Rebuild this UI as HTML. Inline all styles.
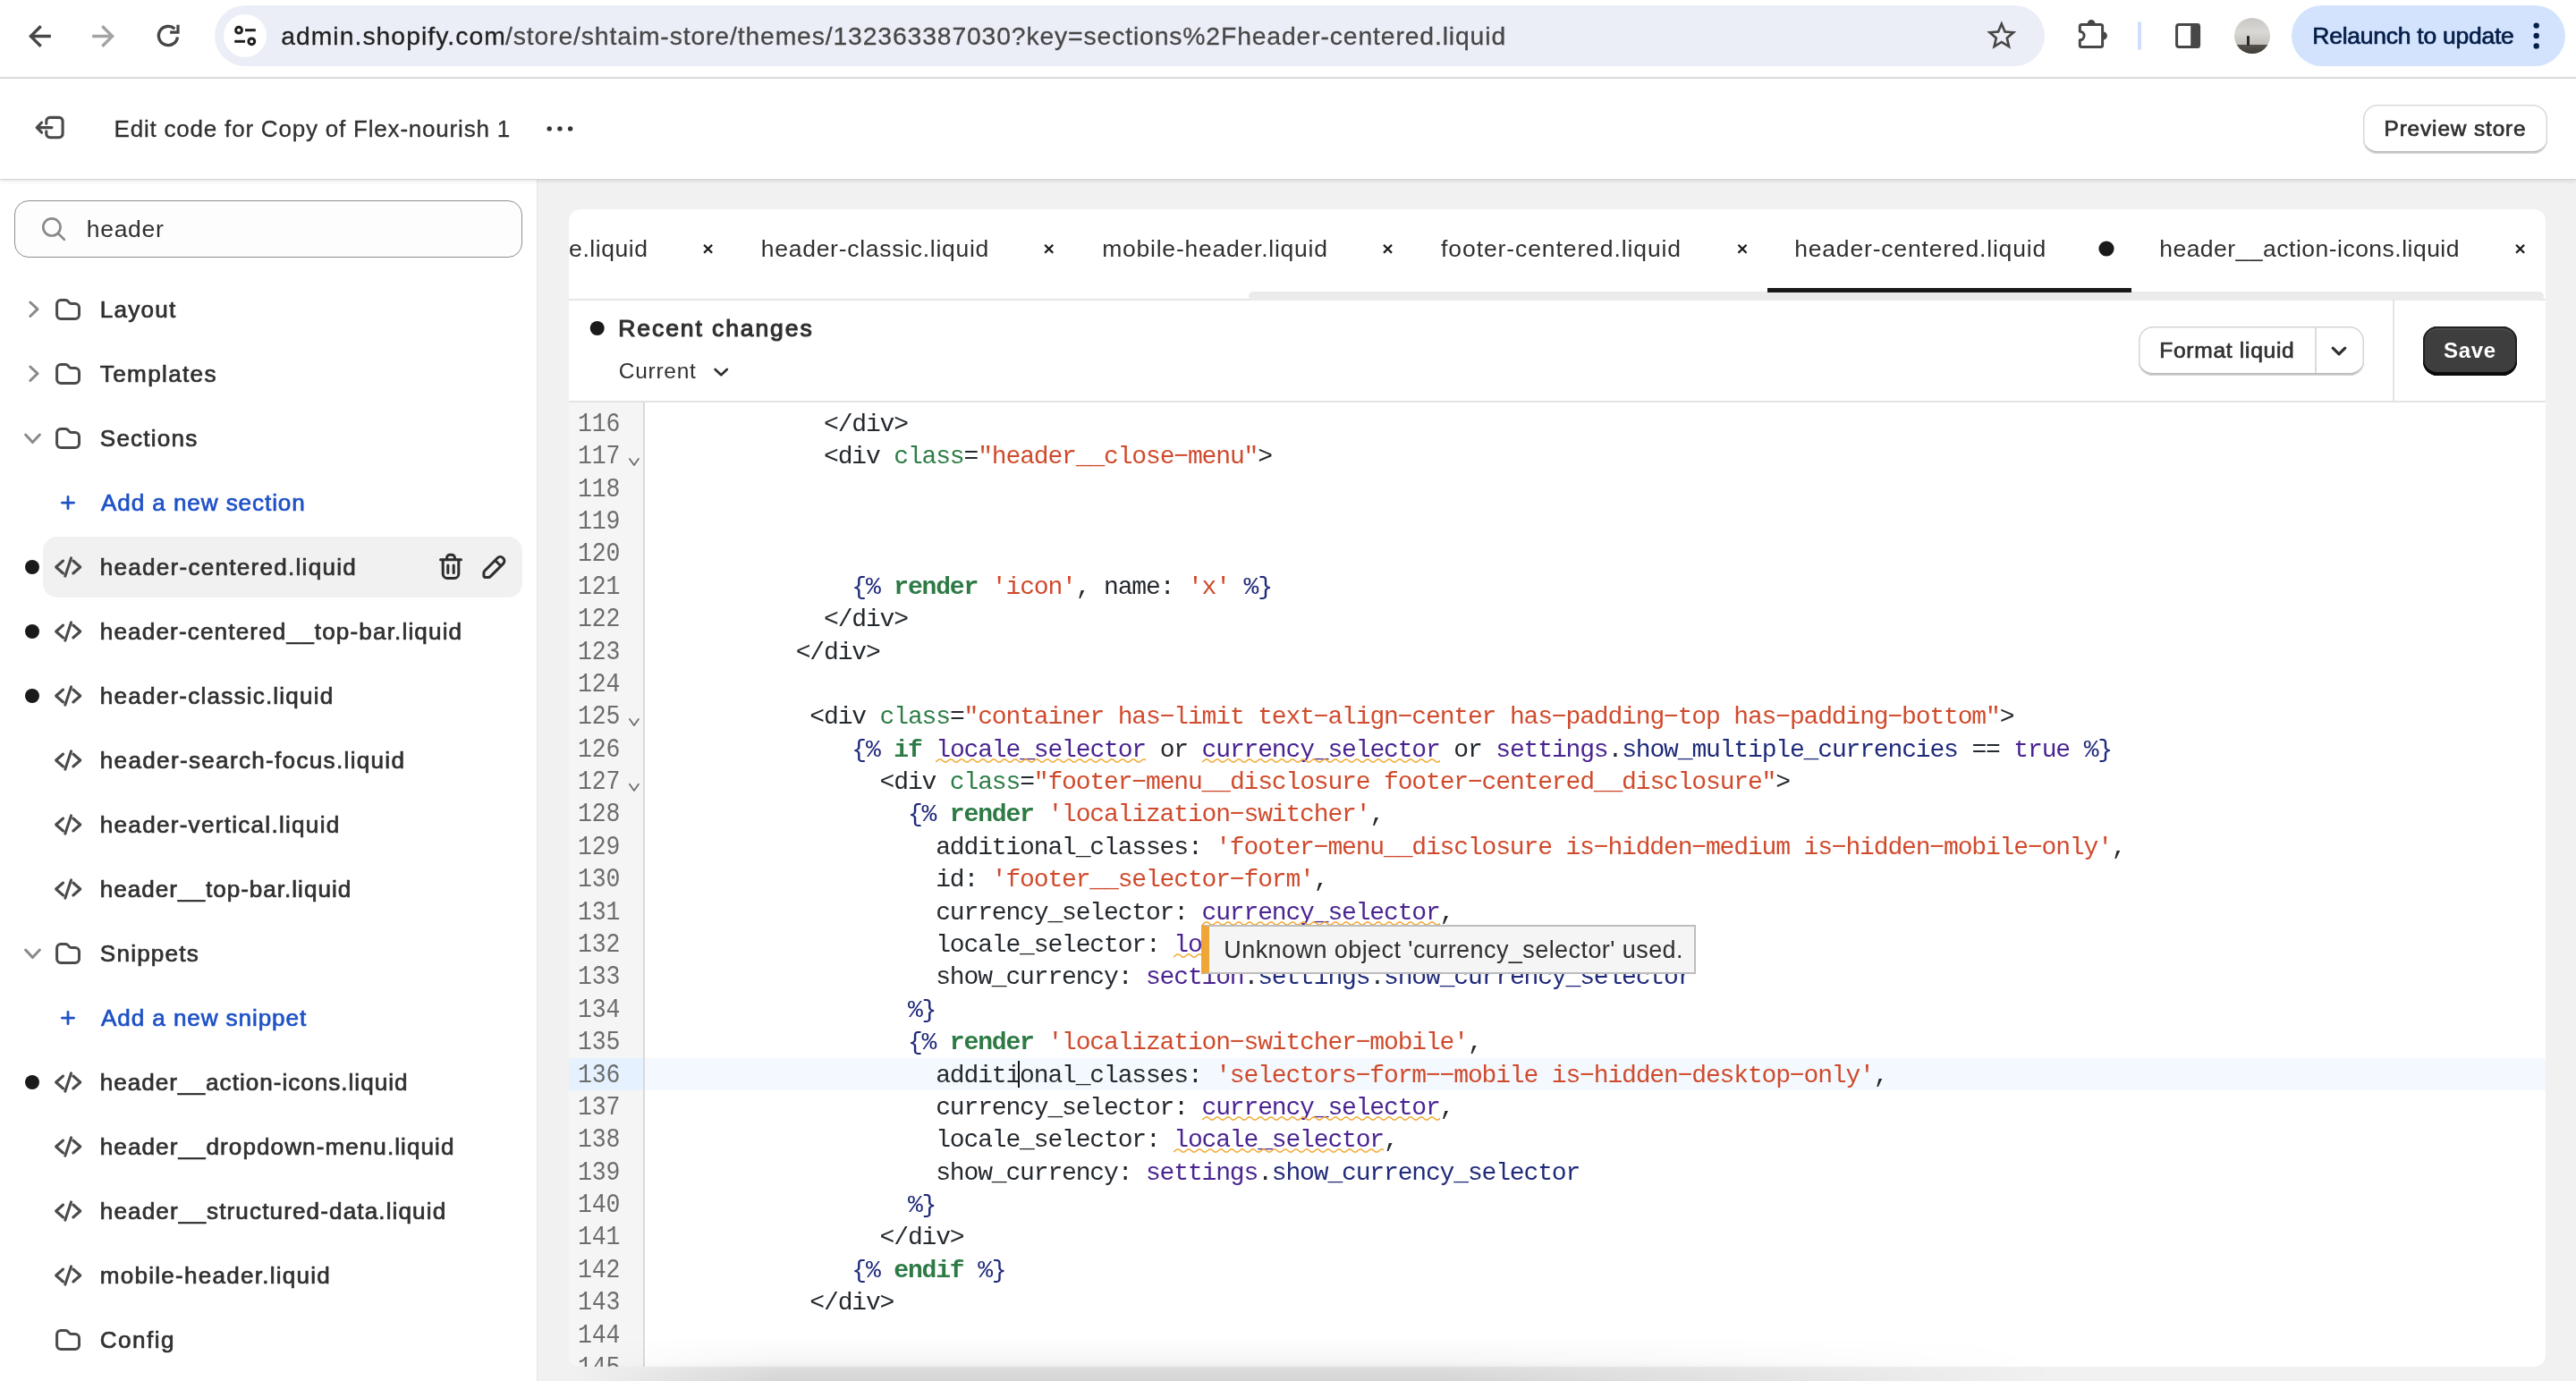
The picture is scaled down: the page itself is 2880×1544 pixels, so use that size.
<!DOCTYPE html><html><head><meta charset="utf-8"><title>Edit code</title><style>*{box-sizing:border-box;margin:0;padding:0}
html,body{width:2880px;height:1544px;overflow:hidden;background:#f1f1f1;font-family:"Liberation Sans",sans-serif}
body{position:relative}
#root{position:absolute;left:0;top:0;width:2880px;height:1544px;will-change:transform}
.abs{position:absolute}
.tx{position:absolute;white-space:nowrap;line-height:40px;height:40px;z-index:10}
svg{position:absolute;overflow:visible}
/* chrome toolbar */
#ctb{position:absolute;left:0;top:0;width:2880px;height:88px;background:#fff;border-bottom:2px solid #dcdee1}
#url{position:absolute;left:240px;top:6px;width:2046px;height:68px;border-radius:34px;background:#ebeef7}
#tune{position:absolute;left:250px;top:16px;width:48px;height:48px;border-radius:24px;background:#fff}
#relaunch{position:absolute;left:2562px;top:6px;width:306px;height:68px;border-radius:34px;background:#d3e3fd}
#avatar{position:absolute;left:2498px;top:20px;width:40px;height:40px;border-radius:20px;overflow:hidden;background:linear-gradient(#c9c7c3 0,#dad8d4 40%,#c4c1bc 74%,#57524c 76%,#3f3b36 100%)}
#avatar i{position:absolute;left:14px;top:20px;width:3px;height:11px;background:#2a2724;border-radius:1px}
#cdiv{position:absolute;left:2390px;top:24px;width:3.6px;height:32px;border-radius:2px;background:#d0defa}
/* shopify header */
#shdr{position:absolute;left:0;top:88px;width:2880px;height:112px;background:#fff;box-shadow:0 1px 0 #d5d5d5,0 2px 5px rgba(0,0,0,.12);z-index:2}
#pv{position:absolute;left:2642px;top:117px;width:206px;height:55px;border-radius:16px;background:#fff;box-shadow:inset 0 0 0 1.5px #d9d9d9,inset 0 -3px 0 #b8b8b8;z-index:3}
/* sidebar */
#side{position:absolute;left:0;top:200px;width:601px;height:1344px;background:#fff;border-right:1.4px solid #e4e4e4}
#search{position:absolute;left:16px;top:224px;width:568px;height:64px;border-radius:16px;background:#fdfdfd;border:1.3px solid #8a8f94}
#sel{position:absolute;left:48px;top:600px;width:536px;height:67.6px;border-radius:16px;background:#f1f1f1}
/* card */
#card{position:absolute;left:636px;top:234px;width:2210px;height:1294px;border-radius:13px;background:#fff;overflow:hidden}
#tabline{position:absolute;left:0;top:99.5px;width:2210px;height:2px;background:#e6e6e6}
#tabthumb{position:absolute;left:760px;top:92px;width:1448px;height:9.5px;border-radius:5px;background:#ebebeb}
#tabact{position:absolute;left:1340px;top:88px;width:407px;height:5px;background:#1a1a1a}
#tbline{position:absolute;left:0;top:213.5px;width:2210px;height:2px;background:#e3e3e3}
#tbdiv{position:absolute;left:2039px;top:101px;width:2px;height:113px;background:#e3e3e3}
#fmt{position:absolute;left:1755px;top:131px;width:252px;height:55px;border-radius:16px;background:#fff;box-shadow:inset 0 0 0 1.5px #d4d4d4,inset 0 -3px 0 #b8b8b8}
#fmt i{position:absolute;left:197px;top:1px;width:2px;height:51px;background:#dcdcdc}
#save{position:absolute;left:2073px;top:131px;width:105px;height:55px;border-radius:16px;background:#3e3e3e;box-shadow:inset 0 -4px 0 #0c0c0c,inset 0 0 0 2px #222,inset 0 4px 0 #4c4c4c}
#gutter{position:absolute;left:0;top:215.5px;width:85px;height:1080px;background:#f5f5f5;border-right:2px solid #dadada}
/* code */
.code{position:absolute;left:636px;top:0;width:2210px;height:1528px;font-family:"Liberation Mono",monospace;z-index:3;overflow:hidden;clip-path:inset(450px 0 0 0 round 0 0 13px 13px)}
.ln{position:absolute;left:0;width:2210px;white-space:pre}
.ln.act{background:#f3f9fe}
.ln.act .num{background:#e5f1fe}
.num{position:absolute;left:0;top:0;padding-top:1.6px;width:85px;border-right:2px solid #dadada;height:100%;padding-left:10px;color:#6d6d6d}
.src{position:absolute;top:1.6px}
.num i{display:inline-block;font-style:normal;transform:scaleY(1.09);transform-origin:50% 66%}
.b{font-weight:700}
.sqv{overflow:hidden}
/* tooltip */
#tip{position:absolute;left:1343.2px;top:1034.4px;width:552.6px;height:55px;background:#f5f5f5;border:2px solid #bdbdbd;border-left:9.6px solid #f0a637;z-index:6}
#botshadow{position:absolute;left:640px;top:1494px;width:1660px;height:50px;z-index:7;background:linear-gradient(to bottom,rgba(0,0,0,0) 0,rgba(0,0,0,.035) 55%,rgba(0,0,0,.09) 75%,rgba(0,0,0,.115) 100%);-webkit-mask-image:linear-gradient(to right,transparent 0,#000 14%,#000 58%,transparent 100%);mask-image:linear-gradient(to right,transparent 0,#000 14%,#000 58%,transparent 100%)}
</style></head><body><div id="root"><div id="ctb"></div><div id="url"></div><div id="tune"></div><div id="relaunch"></div><div id="avatar"><i></i></div><div id="cdiv"></div><svg style="left:25.5px;top:21.6px" width="37" height="37" viewBox="0 0 24 24"><path fill="#474747" d="M20 10.9H8.1l5.45-5.45L12 3.9l-8.1 8.1 8.1 8.1 1.55-1.55L8.1 13.1H20v-2.2z"/></svg><svg style="left:97px;top:21.6px" width="37" height="37" viewBox="0 0 24 24"><path fill="#a3a3a3" d="M4 10.9h11.9l-5.45-5.45L12 3.9l8.1 8.1-8.1 8.1-1.55-1.55L15.9 13.1H4v-2.2z"/></svg><svg style="left:0;top:0" width="400" height="88"><g fill="none" stroke="#474747" stroke-width="3.4"><path d="M195.3 32.3A10.6 10.6 0 1 0 198.5 41.4"/><path d="M199 27.7V36.2H190.1" stroke-width="3.2"/></g></svg><svg style="left:0;top:0" width="400" height="88"><g fill="none" stroke="#1f1f1f" stroke-width="3"><circle cx="267" cy="33.7" r="3.4"/><path d="M274 33.7H285.8"/><path d="M262.2 46.3H274"/><circle cx="281.3" cy="46.3" r="3.4"/></g></svg><svg style="left:2217.7px;top:19.6px" width="39.6" height="39.6" viewBox="0 0 24 24"><path fill="#474747" d="M22 9.24l-7.19-.62L12 2 9.19 8.63 2 9.24l5.46 4.73L5.82 21 12 17.27 18.18 21l-1.63-7.03L22 9.24zM12 15.4l-3.76 2.27 1-4.28-3.32-2.88 4.38-.38L12 6.1l1.71 4.04 4.38.38-3.32 2.88 1 4.28L12 15.4z"/></svg><svg style="left:0;top:0" width="2880" height="88"><path fill="none" stroke="#474747" stroke-width="3" stroke-linejoin="round" d="M2325.3 35.2V29.4a2 2 0 0 1 2-2H2348.6a2 2 0 0 1 2 2V50.5a2 2 0 0 1-2 2H2327.3a2 2 0 0 1-2-2V44.8A4.8 4.8 0 0 0 2325.3 35.2z"/><path fill="#474747" d="M2333.6 26.6A4.5 4.5 0 0 1 2342.6 26.6zM2351.4 35.5A4.5 4.5 0 0 1 2351.4 44.5z"/></svg><svg style="left:0;top:0" width="2880" height="88"><rect x="2433.6" y="27.4" width="25" height="25.1" rx="2.6" fill="none" stroke="#474747" stroke-width="3"/><rect x="2449.2" y="26.5" width="10" height="27" fill="#474747"/></svg><svg style="left:0;top:0" width="2880" height="88"><g fill="#041e49"><circle cx="2835.7" cy="28.6" r="3.2"/><circle cx="2835.7" cy="40" r="3.2"/><circle cx="2835.7" cy="51.4" r="3.2"/></g></svg><div id="shdr"></div><div id="pv"></div><svg style="left:0;top:88px;z-index:4" width="800" height="112"><g fill="none" stroke="#4a4a4a" stroke-width="3.1" stroke-linecap="round" stroke-linejoin="round"><path d="M51.8 50.3V47.4a4 4 0 0 1 4-4H66.1a4 4 0 0 1 4 4V61.7a4 4 0 0 1-4 4H55.8a4 4 0 0 1-4-4V58.9"/><path d="M58 54.6H42.6M46.6 49L41.2 54.6L46.6 60.2"/></g><g fill="#333"><circle cx="614.2" cy="55.9" r="2.7"/><circle cx="625.9" cy="55.9" r="2.7"/><circle cx="637.6" cy="55.9" r="2.7"/></g></svg><div id="side"></div><div id="search"></div><div id="sel"></div><svg style="left:0;top:0;z-index:1" width="601" height="1544"><g fill="none" stroke="#8a8a8a" stroke-width="2.7" stroke-linecap="round"><circle cx="57.9" cy="253.9" r="9.6"/><path d="M65 261L71.9 267.9"/></g><path d="M33.8 338L42 345.7L33.8 353.5" fill="none" stroke="#8a8a8a" stroke-width="3" stroke-linecap="round" stroke-linejoin="round"/><path transform="translate(0,0)" d="M63.6 340a4.5 4.5 0 0 1 4.5-4.5h5.2a3.5 3.5 0 0 1 2.7 1.3l1.1 1.3a3.5 3.5 0 0 0 2.7 1.3h4.2a4.5 4.5 0 0 1 4.5 4.5v8a4.5 4.5 0 0 1-4.5 4.5H68.1a4.5 4.5 0 0 1-4.5-4.5z" fill="none" stroke="#4a4a4a" stroke-width="3" stroke-linejoin="round"/><path d="M33.8 410L42 417.7L33.8 425.5" fill="none" stroke="#8a8a8a" stroke-width="3" stroke-linecap="round" stroke-linejoin="round"/><path transform="translate(0,72)" d="M63.6 340a4.5 4.5 0 0 1 4.5-4.5h5.2a3.5 3.5 0 0 1 2.7 1.3l1.1 1.3a3.5 3.5 0 0 0 2.7 1.3h4.2a4.5 4.5 0 0 1 4.5 4.5v8a4.5 4.5 0 0 1-4.5 4.5H68.1a4.5 4.5 0 0 1-4.5-4.5z" fill="none" stroke="#4a4a4a" stroke-width="3" stroke-linejoin="round"/><path d="M28.6 486L36.4 494.6L44.4 486" fill="none" stroke="#8a8a8a" stroke-width="3" stroke-linecap="round" stroke-linejoin="round"/><path transform="translate(0,144)" d="M63.6 340a4.5 4.5 0 0 1 4.5-4.5h5.2a3.5 3.5 0 0 1 2.7 1.3l1.1 1.3a3.5 3.5 0 0 0 2.7 1.3h4.2a4.5 4.5 0 0 1 4.5 4.5v8a4.5 4.5 0 0 1-4.5 4.5H68.1a4.5 4.5 0 0 1-4.5-4.5z" fill="none" stroke="#4a4a4a" stroke-width="3" stroke-linejoin="round"/><path d="M69.4 562.1H82.6M76 555.5V568.7" fill="none" stroke="#1f52c7" stroke-width="2.8" stroke-linecap="round"/><g fill="none" stroke="#4a4a4a" stroke-width="3" stroke-linecap="round" stroke-linejoin="round"><path d="M70.6 627L62.6 634L70.6 641"/><path d="M79.6 623.8L72.8 644.2"/><path d="M81.8 627L89.8 634L81.8 641"/></g><circle cx="36" cy="634" r="8" fill="#1a1a1a"/><g fill="none" stroke="#4a4a4a" stroke-width="3" stroke-linecap="round" stroke-linejoin="round"><path d="M70.6 699L62.6 706L70.6 713"/><path d="M79.6 695.8L72.8 716.2"/><path d="M81.8 699L89.8 706L81.8 713"/></g><circle cx="36" cy="706" r="8" fill="#1a1a1a"/><g fill="none" stroke="#4a4a4a" stroke-width="3" stroke-linecap="round" stroke-linejoin="round"><path d="M70.6 771L62.6 778L70.6 785"/><path d="M79.6 767.8L72.8 788.2"/><path d="M81.8 771L89.8 778L81.8 785"/></g><circle cx="36" cy="778" r="8" fill="#1a1a1a"/><g fill="none" stroke="#4a4a4a" stroke-width="3" stroke-linecap="round" stroke-linejoin="round"><path d="M70.6 843L62.6 850L70.6 857"/><path d="M79.6 839.8L72.8 860.2"/><path d="M81.8 843L89.8 850L81.8 857"/></g><g fill="none" stroke="#4a4a4a" stroke-width="3" stroke-linecap="round" stroke-linejoin="round"><path d="M70.6 915L62.6 922L70.6 929"/><path d="M79.6 911.8L72.8 932.2"/><path d="M81.8 915L89.8 922L81.8 929"/></g><g fill="none" stroke="#4a4a4a" stroke-width="3" stroke-linecap="round" stroke-linejoin="round"><path d="M70.6 987L62.6 994L70.6 1001"/><path d="M79.6 983.8L72.8 1004.2"/><path d="M81.8 987L89.8 994L81.8 1001"/></g><path d="M28.6 1062L36.4 1070.6L44.4 1062" fill="none" stroke="#8a8a8a" stroke-width="3" stroke-linecap="round" stroke-linejoin="round"/><path transform="translate(0,720)" d="M63.6 340a4.5 4.5 0 0 1 4.5-4.5h5.2a3.5 3.5 0 0 1 2.7 1.3l1.1 1.3a3.5 3.5 0 0 0 2.7 1.3h4.2a4.5 4.5 0 0 1 4.5 4.5v8a4.5 4.5 0 0 1-4.5 4.5H68.1a4.5 4.5 0 0 1-4.5-4.5z" fill="none" stroke="#4a4a4a" stroke-width="3" stroke-linejoin="round"/><path d="M69.4 1138.1H82.6M76 1131.5V1144.7" fill="none" stroke="#1f52c7" stroke-width="2.8" stroke-linecap="round"/><g fill="none" stroke="#4a4a4a" stroke-width="3" stroke-linecap="round" stroke-linejoin="round"><path d="M70.6 1203L62.6 1210L70.6 1217"/><path d="M79.6 1199.8L72.8 1220.2"/><path d="M81.8 1203L89.8 1210L81.8 1217"/></g><circle cx="36" cy="1210" r="8" fill="#1a1a1a"/><g fill="none" stroke="#4a4a4a" stroke-width="3" stroke-linecap="round" stroke-linejoin="round"><path d="M70.6 1275L62.6 1282L70.6 1289"/><path d="M79.6 1271.8L72.8 1292.2"/><path d="M81.8 1275L89.8 1282L81.8 1289"/></g><g fill="none" stroke="#4a4a4a" stroke-width="3" stroke-linecap="round" stroke-linejoin="round"><path d="M70.6 1347L62.6 1354L70.6 1361"/><path d="M79.6 1343.8L72.8 1364.2"/><path d="M81.8 1347L89.8 1354L81.8 1361"/></g><g fill="none" stroke="#4a4a4a" stroke-width="3" stroke-linecap="round" stroke-linejoin="round"><path d="M70.6 1419L62.6 1426L70.6 1433"/><path d="M79.6 1415.8L72.8 1436.2"/><path d="M81.8 1419L89.8 1426L81.8 1433"/></g><path transform="translate(0,1152)" d="M63.6 340a4.5 4.5 0 0 1 4.5-4.5h5.2a3.5 3.5 0 0 1 2.7 1.3l1.1 1.3a3.5 3.5 0 0 0 2.7 1.3h4.2a4.5 4.5 0 0 1 4.5 4.5v8a4.5 4.5 0 0 1-4.5 4.5H68.1a4.5 4.5 0 0 1-4.5-4.5z" fill="none" stroke="#4a4a4a" stroke-width="3" stroke-linejoin="round"/><g fill="none" stroke="#2e2e2e" stroke-width="3" stroke-linecap="round" stroke-linejoin="round"><path d="M492.5 625.8H515.5"/><path d="M499.6 625V623.6a3.4 3.4 0 0 1 3.4-3.4h2a3.4 3.4 0 0 1 3.4 3.4v1.4"/><path d="M495.2 626.5V641.5a5 5 0 0 0 5 5h7.6a5 5 0 0 0 5-5V626.5"/><path d="M500.8 632V640.5M507.2 632V640.5"/></g><g fill="none" stroke="#2e2e2e" stroke-width="3" stroke-linecap="round" stroke-linejoin="round"><path d="M540.9 643.6V640.3a3 3 0 0 1 .9-2.1L556.3 623.7a4.2 4.2 0 0 1 5.9 0l.5.5a4.2 4.2 0 0 1 0 5.9L548.2 644.6a3 3 0 0 1-2.1.9H542.8a1.9 1.9 0 0 1-1.9-1.9z"/><path d="M553.9 626.7l5.5 5.5"/></g></svg><div id="card"><div id="tabline"></div><div id="tabthumb"></div><div id="tabact"></div><div id="tbline"></div><div id="tbdiv"></div><div id="fmt"><i></i></div><div id="save"></div><div id="gutter"></div><svg style="left:0;top:0" width="2210" height="220"><path d="M151.1 39.8L160.1 48.8M160.1 39.8L151.1 48.8" stroke="#1a1a1a" stroke-width="2.3" fill="none"/><path d="M532.2 39.8L541.2 48.8M541.2 39.8L532.2 48.8" stroke="#1a1a1a" stroke-width="2.3" fill="none"/><path d="M911.0 39.8L920.0 48.8M920.0 39.8L911.0 48.8" stroke="#1a1a1a" stroke-width="2.3" fill="none"/><path d="M1307.5 39.8L1316.5 48.8M1316.5 39.8L1307.5 48.8" stroke="#1a1a1a" stroke-width="2.3" fill="none"/><path d="M2177.1 39.8L2186.1 48.8M2186.1 39.8L2177.1 48.8" stroke="#1a1a1a" stroke-width="2.3" fill="none"/><circle cx="1719" cy="44" r="8.6" fill="#1a1a1a"/><circle cx="31.7" cy="133" r="8" fill="#1a1a1a"/><path d="M163.6 179L170.2 185.2L176.8 179" fill="none" stroke="#303030" stroke-width="2.7" stroke-linecap="round" stroke-linejoin="round"/><path d="M1972.2 155.2L1979 161.8L1985.8 155.2" fill="none" stroke="#303030" stroke-width="3.2" stroke-linecap="round" stroke-linejoin="round"/></svg></div><span class="tx" id="t0" style="left:314.20px;top:20.00px;font-size:28.3px;color:#1f1f1f;font-weight:400;letter-spacing:1.046px;-webkit-text-stroke:0.3px #1f1f1f;">admin.shopify.com</span><span class="tx" id="t1" style="left:565.00px;top:20.00px;font-size:28.3px;color:#474747;font-weight:400;letter-spacing:0.876px;-webkit-text-stroke:0.3px #474747;">/store/shtaim-store/themes/132363387030?key=sections%2Fheader-centered.liquid</span><span class="tx" id="t2" style="left:2585.30px;top:20.00px;font-size:26.5px;color:#041e49;font-weight:400;letter-spacing:-0.258px;-webkit-text-stroke:0.7px #041e49;">Relaunch to update</span><span class="tx" id="t3" style="left:127.50px;top:124.00px;font-size:26px;color:#303030;font-weight:400;letter-spacing:0.798px;-webkit-text-stroke:0.3px #303030;">Edit code for Copy of Flex-nourish 1</span><span class="tx" id="t4" style="left:2665.50px;top:123.60px;font-size:24.4px;color:#303030;font-weight:400;letter-spacing:0.865px;-webkit-text-stroke:0.7px #303030;">Preview store</span><span class="tx" id="t5" style="left:96.80px;top:236.00px;font-size:26.5px;color:#303030;font-weight:400;letter-spacing:0.697px;">header</span><span class="tx" id="t6" style="left:111.80px;top:326.00px;font-size:26.1px;color:#303030;font-weight:400;letter-spacing:1.223px;-webkit-text-stroke:0.7px #303030;">Layout</span><span class="tx" id="t7" style="left:111.80px;top:398.00px;font-size:26.1px;color:#303030;font-weight:400;letter-spacing:1.351px;-webkit-text-stroke:0.7px #303030;">Templates</span><span class="tx" id="t8" style="left:111.80px;top:470.00px;font-size:26.1px;color:#303030;font-weight:400;letter-spacing:1.201px;-webkit-text-stroke:0.7px #303030;">Sections</span><span class="tx" id="t9" style="left:113.00px;top:542.00px;font-size:26.1px;color:#1f52c7;font-weight:400;letter-spacing:0.909px;-webkit-text-stroke:0.7px #1f52c7;">Add a new section</span><span class="tx" id="t10" style="left:111.80px;top:614.00px;font-size:26.1px;color:#303030;font-weight:400;letter-spacing:1.251px;-webkit-text-stroke:0.7px #303030;">header-centered.liquid</span><span class="tx" id="t11" style="left:111.80px;top:686.00px;font-size:26.1px;color:#303030;font-weight:400;letter-spacing:1.147px;-webkit-text-stroke:0.7px #303030;">header-centered__top-bar.liquid</span><span class="tx" id="t12" style="left:111.80px;top:758.00px;font-size:26.1px;color:#303030;font-weight:400;letter-spacing:1.204px;-webkit-text-stroke:0.7px #303030;">header-classic.liquid</span><span class="tx" id="t13" style="left:111.80px;top:830.00px;font-size:26.1px;color:#303030;font-weight:400;letter-spacing:1.308px;-webkit-text-stroke:0.7px #303030;">header-search-focus.liquid</span><span class="tx" id="t14" style="left:111.80px;top:902.00px;font-size:26.1px;color:#303030;font-weight:400;letter-spacing:1.269px;-webkit-text-stroke:0.7px #303030;">header-vertical.liquid</span><span class="tx" id="t15" style="left:111.80px;top:974.00px;font-size:26.1px;color:#303030;font-weight:400;letter-spacing:0.986px;-webkit-text-stroke:0.7px #303030;">header__top-bar.liquid</span><span class="tx" id="t16" style="left:111.80px;top:1046.00px;font-size:26.1px;color:#303030;font-weight:400;letter-spacing:1.207px;-webkit-text-stroke:0.7px #303030;">Snippets</span><span class="tx" id="t17" style="left:113.00px;top:1118.00px;font-size:26.1px;color:#1f52c7;font-weight:400;letter-spacing:0.906px;-webkit-text-stroke:0.7px #1f52c7;">Add a new snippet</span><span class="tx" id="t18" style="left:111.80px;top:1190.00px;font-size:26.1px;color:#303030;font-weight:400;letter-spacing:1.000px;-webkit-text-stroke:0.7px #303030;">header__action-icons.liquid</span><span class="tx" id="t19" style="left:111.80px;top:1262.00px;font-size:26.1px;color:#303030;font-weight:400;letter-spacing:1.060px;-webkit-text-stroke:0.7px #303030;">header__dropdown-menu.liquid</span><span class="tx" id="t20" style="left:111.80px;top:1334.00px;font-size:26.1px;color:#303030;font-weight:400;letter-spacing:1.118px;-webkit-text-stroke:0.7px #303030;">header__structured-data.liquid</span><span class="tx" id="t21" style="left:111.80px;top:1406.00px;font-size:26.1px;color:#303030;font-weight:400;letter-spacing:1.233px;-webkit-text-stroke:0.7px #303030;">mobile-header.liquid</span><span class="tx" id="t22" style="left:111.80px;top:1478.00px;font-size:26.1px;color:#303030;font-weight:400;letter-spacing:1.460px;-webkit-text-stroke:0.7px #303030;">Config</span><span class="tx" id="t23" style="left:636.10px;top:258.30px;font-size:26.5px;color:#303030;font-weight:400;letter-spacing:0.552px;">e.liquid</span><span class="tx" id="t24" style="left:850.80px;top:258.30px;font-size:26.5px;color:#303030;font-weight:400;letter-spacing:0.719px;">header-classic.liquid</span><span class="tx" id="t25" style="left:1232.20px;top:258.30px;font-size:26.5px;color:#303030;font-weight:400;letter-spacing:0.771px;">mobile-header.liquid</span><span class="tx" id="t26" style="left:1611.10px;top:258.30px;font-size:26.5px;color:#303030;font-weight:400;letter-spacing:0.906px;">footer-centered.liquid</span><span class="tx" id="t27" style="left:2006.20px;top:258.30px;font-size:26.5px;color:#303030;font-weight:400;letter-spacing:0.822px;">header-centered.liquid</span><span class="tx" id="t28" style="left:2414.20px;top:258.30px;font-size:26.5px;color:#303030;font-weight:400;letter-spacing:0.487px;">header__action-icons.liquid</span><span class="tx" id="t29" style="left:691.30px;top:347.00px;font-size:26.5px;color:#303030;font-weight:400;letter-spacing:1.912px;-webkit-text-stroke:1.1px #303030;">Recent changes</span><span class="tx" id="t30" style="left:691.80px;top:394.80px;font-size:24.5px;color:#303030;font-weight:400;letter-spacing:0.728px;">Current</span><span class="tx" id="t31" style="left:2414.20px;top:372.00px;font-size:24.6px;color:#303030;font-weight:400;letter-spacing:0.703px;-webkit-text-stroke:0.7px #303030;">Format liquid</span><span class="tx" id="t32" style="left:2732.10px;top:371.70px;font-size:24px;color:#ffffff;font-weight:700;letter-spacing:0.684px;">Save</span><span class="tx" id="t33" style="left:1368.30px;top:1042.00px;font-size:27px;color:#303030;font-weight:400;letter-spacing:0.428px;">Unknown object &#x27;currency_selector&#x27; used.</span><div class="code" style="font-size:28px;line-height:36.38px;letter-spacing:-1.1527px"><div class="ln" style="top:455.31px;height:36.38px"><span class="num" style="font-size:26.5px;letter-spacing:-0.2026px"><i>116</i></span><span class="src" style="left:285.00px"><span style="color:#24292e">&lt;/div&gt;</span></span></div><div class="ln" style="top:491.69px;height:36.38px"><span class="num" style="font-size:26.5px;letter-spacing:-0.2026px"><i>117</i></span><span class="src" style="left:285.00px"><span style="color:#24292e">&lt;div </span><span style="color:#2e7d46">class</span><span style="color:#24292e">=</span><span style="color:#d04a2c">&quot;header__close−menu&quot;</span><span style="color:#24292e">&gt;</span></span></div><div class="ln" style="top:528.07px;height:36.38px"><span class="num" style="font-size:26.5px;letter-spacing:-0.2026px"><i>118</i></span></div><div class="ln" style="top:564.45px;height:36.38px"><span class="num" style="font-size:26.5px;letter-spacing:-0.2026px"><i>119</i></span></div><div class="ln" style="top:600.83px;height:36.38px"><span class="num" style="font-size:26.5px;letter-spacing:-0.2026px"><i>120</i></span></div><div class="ln" style="top:637.21px;height:36.38px"><span class="num" style="font-size:26.5px;letter-spacing:-0.2026px"><i>121</i></span><span class="src" style="left:316.30px"><span style="color:#1f2a7a">{%</span><span style="color:#24292e"> </span><span class="b" style="color:#2d7a45">render</span><span style="color:#24292e"> </span><span style="color:#d04a2c">&#x27;icon&#x27;</span><span style="color:#24292e">, name: </span><span style="color:#d04a2c">&#x27;x&#x27;</span><span style="color:#24292e"> </span><span style="color:#1f2a7a">%}</span></span></div><div class="ln" style="top:673.59px;height:36.38px"><span class="num" style="font-size:26.5px;letter-spacing:-0.2026px"><i>122</i></span><span class="src" style="left:285.00px"><span style="color:#24292e">&lt;/div&gt;</span></span></div><div class="ln" style="top:709.97px;height:36.38px"><span class="num" style="font-size:26.5px;letter-spacing:-0.2026px"><i>123</i></span><span class="src" style="left:253.70px"><span style="color:#24292e">&lt;/div&gt;</span></span></div><div class="ln" style="top:746.35px;height:36.38px"><span class="num" style="font-size:26.5px;letter-spacing:-0.2026px"><i>124</i></span></div><div class="ln" style="top:782.73px;height:36.38px"><span class="num" style="font-size:26.5px;letter-spacing:-0.2026px"><i>125</i></span><span class="src" style="left:269.35px"><span style="color:#24292e">&lt;div </span><span style="color:#2e7d46">class</span><span style="color:#24292e">=</span><span style="color:#d04a2c">&quot;container has−limit text−align−center has−padding−top has−padding−bottom&quot;</span><span style="color:#24292e">&gt;</span></span></div><div class="ln" style="top:819.11px;height:36.38px"><span class="num" style="font-size:26.5px;letter-spacing:-0.2026px"><i>126</i></span><span class="src" style="left:316.30px"><span style="color:#1f2a7a">{%</span><span style="color:#24292e"> </span><span class="b" style="color:#2d7a45">if</span><span style="color:#24292e"> </span><span class="sq" style="color:#4a2492">locale_selector</span><span style="color:#24292e"> or </span><span class="sq" style="color:#4a2492">currency_selector</span><span style="color:#24292e"> or </span><span style="color:#4a2492">settings</span><span style="color:#24292e">.</span><span style="color:#1f2a7a">show_multiple_currencies</span><span style="color:#24292e"> == </span><span style="color:#4a2492">true</span><span style="color:#24292e"> </span><span style="color:#1f2a7a">%}</span></span><svg class="sqv" style="left:410.20px;top:27.84px" width="234.75" height="7" viewBox="0 0 234.75 7"><path d="M0 5L4 2L6 2L10 5L12 5L16 2L18 2L22 5L24 5L28 2L30 2L34 5L36 5L40 2L42 2L46 5L48 5L52 2L54 2L58 5L60 5L64 2L66 2L70 5L72 5L76 2L78 2L82 5L84 5L88 2L90 2L94 5L96 5L100 2L102 2L106 5L108 5L112 2L114 2L118 5L120 5L124 2L126 2L130 5L132 5L136 2L138 2L142 5L144 5L148 2L150 2L154 5L156 5L160 2L162 2L166 5L168 5L172 2L174 2L178 5L180 5L184 2L186 2L190 5L192 5L196 2L198 2L202 5L204 5L208 2L210 2L214 5L216 5L220 2L222 2L226 5L228 5L232 2L234 2L238 5L240 5L244 2L246 2L250 5L252 5" fill="none" stroke="#f3a730" stroke-width="1.5"/></svg><svg class="sqv" style="left:707.55px;top:27.84px" width="266.05" height="7" viewBox="0 0 266.05 7"><path d="M0 5L4 2L6 2L10 5L12 5L16 2L18 2L22 5L24 5L28 2L30 2L34 5L36 5L40 2L42 2L46 5L48 5L52 2L54 2L58 5L60 5L64 2L66 2L70 5L72 5L76 2L78 2L82 5L84 5L88 2L90 2L94 5L96 5L100 2L102 2L106 5L108 5L112 2L114 2L118 5L120 5L124 2L126 2L130 5L132 5L136 2L138 2L142 5L144 5L148 2L150 2L154 5L156 5L160 2L162 2L166 5L168 5L172 2L174 2L178 5L180 5L184 2L186 2L190 5L192 5L196 2L198 2L202 5L204 5L208 2L210 2L214 5L216 5L220 2L222 2L226 5L228 5L232 2L234 2L238 5L240 5L244 2L246 2L250 5L252 5L256 2L258 2L262 5L264 5L268 2L270 2L274 5L276 5L280 2L282 2L286 5L288 5" fill="none" stroke="#f3a730" stroke-width="1.5"/></svg></div><div class="ln" style="top:855.49px;height:36.38px"><span class="num" style="font-size:26.5px;letter-spacing:-0.2026px"><i>127</i></span><span class="src" style="left:347.60px"><span style="color:#24292e">&lt;div </span><span style="color:#2e7d46">class</span><span style="color:#24292e">=</span><span style="color:#d04a2c">&quot;footer−menu__disclosure footer−centered__disclosure&quot;</span><span style="color:#24292e">&gt;</span></span></div><div class="ln" style="top:891.87px;height:36.38px"><span class="num" style="font-size:26.5px;letter-spacing:-0.2026px"><i>128</i></span><span class="src" style="left:378.90px"><span style="color:#1f2a7a">{%</span><span style="color:#24292e"> </span><span class="b" style="color:#2d7a45">render</span><span style="color:#24292e"> </span><span style="color:#d04a2c">&#x27;localization−switcher&#x27;</span><span style="color:#24292e">,</span></span></div><div class="ln" style="top:928.25px;height:36.38px"><span class="num" style="font-size:26.5px;letter-spacing:-0.2026px"><i>129</i></span><span class="src" style="left:410.20px"><span style="color:#24292e">additional_classes: </span><span style="color:#d04a2c">&#x27;footer−menu__disclosure is−hidden−medium is−hidden−mobile−only&#x27;</span><span style="color:#24292e">,</span></span></div><div class="ln" style="top:964.63px;height:36.38px"><span class="num" style="font-size:26.5px;letter-spacing:-0.2026px"><i>130</i></span><span class="src" style="left:410.20px"><span style="color:#24292e">id: </span><span style="color:#d04a2c">&#x27;footer__selector−form&#x27;</span><span style="color:#24292e">,</span></span></div><div class="ln" style="top:1001.01px;height:36.38px"><span class="num" style="font-size:26.5px;letter-spacing:-0.2026px"><i>131</i></span><span class="src" style="left:410.20px"><span style="color:#24292e">currency_selector: </span><span class="sq" style="color:#4a2492">currency_selector</span><span style="color:#24292e">,</span></span><svg class="sqv" style="left:707.55px;top:27.84px" width="266.05" height="7" viewBox="0 0 266.05 7"><path d="M0 5L4 2L6 2L10 5L12 5L16 2L18 2L22 5L24 5L28 2L30 2L34 5L36 5L40 2L42 2L46 5L48 5L52 2L54 2L58 5L60 5L64 2L66 2L70 5L72 5L76 2L78 2L82 5L84 5L88 2L90 2L94 5L96 5L100 2L102 2L106 5L108 5L112 2L114 2L118 5L120 5L124 2L126 2L130 5L132 5L136 2L138 2L142 5L144 5L148 2L150 2L154 5L156 5L160 2L162 2L166 5L168 5L172 2L174 2L178 5L180 5L184 2L186 2L190 5L192 5L196 2L198 2L202 5L204 5L208 2L210 2L214 5L216 5L220 2L222 2L226 5L228 5L232 2L234 2L238 5L240 5L244 2L246 2L250 5L252 5L256 2L258 2L262 5L264 5L268 2L270 2L274 5L276 5L280 2L282 2L286 5L288 5" fill="none" stroke="#f3a730" stroke-width="1.5"/></svg></div><div class="ln" style="top:1037.39px;height:36.38px"><span class="num" style="font-size:26.5px;letter-spacing:-0.2026px"><i>132</i></span><span class="src" style="left:410.20px"><span style="color:#24292e">locale_selector: </span><span class="sq" style="color:#4a2492">locale_selector</span><span style="color:#24292e">,</span></span><svg class="sqv" style="left:676.25px;top:27.84px" width="234.75" height="7" viewBox="0 0 234.75 7"><path d="M0 5L4 2L6 2L10 5L12 5L16 2L18 2L22 5L24 5L28 2L30 2L34 5L36 5L40 2L42 2L46 5L48 5L52 2L54 2L58 5L60 5L64 2L66 2L70 5L72 5L76 2L78 2L82 5L84 5L88 2L90 2L94 5L96 5L100 2L102 2L106 5L108 5L112 2L114 2L118 5L120 5L124 2L126 2L130 5L132 5L136 2L138 2L142 5L144 5L148 2L150 2L154 5L156 5L160 2L162 2L166 5L168 5L172 2L174 2L178 5L180 5L184 2L186 2L190 5L192 5L196 2L198 2L202 5L204 5L208 2L210 2L214 5L216 5L220 2L222 2L226 5L228 5L232 2L234 2L238 5L240 5L244 2L246 2L250 5L252 5" fill="none" stroke="#f3a730" stroke-width="1.5"/></svg></div><div class="ln" style="top:1073.77px;height:36.38px"><span class="num" style="font-size:26.5px;letter-spacing:-0.2026px"><i>133</i></span><span class="src" style="left:410.20px"><span style="color:#24292e">show_currency: </span><span style="color:#4a2492">section</span><span style="color:#24292e">.</span><span style="color:#1f2a7a">settings</span><span style="color:#24292e">.</span><span style="color:#1f2a7a">show_currency_selector</span></span></div><div class="ln" style="top:1110.15px;height:36.38px"><span class="num" style="font-size:26.5px;letter-spacing:-0.2026px"><i>134</i></span><span class="src" style="left:378.90px"><span style="color:#1f2a7a">%}</span></span></div><div class="ln" style="top:1146.53px;height:36.38px"><span class="num" style="font-size:26.5px;letter-spacing:-0.2026px"><i>135</i></span><span class="src" style="left:378.90px"><span style="color:#1f2a7a">{%</span><span style="color:#24292e"> </span><span class="b" style="color:#2d7a45">render</span><span style="color:#24292e"> </span><span style="color:#d04a2c">&#x27;localization−switcher−mobile&#x27;</span><span style="color:#24292e">,</span></span></div><div class="ln act" style="top:1182.91px;height:36.38px"><span class="num" style="font-size:26.5px;letter-spacing:-0.2026px"><i>136</i></span><span class="src" style="left:410.20px"><span style="color:#24292e">additional_classes: </span><span style="color:#d04a2c">&#x27;selectors−form−−mobile is−hidden−desktop−only&#x27;</span><span style="color:#24292e">,</span></span></div><div class="ln" style="top:1219.29px;height:36.38px"><span class="num" style="font-size:26.5px;letter-spacing:-0.2026px"><i>137</i></span><span class="src" style="left:410.20px"><span style="color:#24292e">currency_selector: </span><span class="sq" style="color:#4a2492">currency_selector</span><span style="color:#24292e">,</span></span><svg class="sqv" style="left:707.55px;top:27.84px" width="266.05" height="7" viewBox="0 0 266.05 7"><path d="M0 5L4 2L6 2L10 5L12 5L16 2L18 2L22 5L24 5L28 2L30 2L34 5L36 5L40 2L42 2L46 5L48 5L52 2L54 2L58 5L60 5L64 2L66 2L70 5L72 5L76 2L78 2L82 5L84 5L88 2L90 2L94 5L96 5L100 2L102 2L106 5L108 5L112 2L114 2L118 5L120 5L124 2L126 2L130 5L132 5L136 2L138 2L142 5L144 5L148 2L150 2L154 5L156 5L160 2L162 2L166 5L168 5L172 2L174 2L178 5L180 5L184 2L186 2L190 5L192 5L196 2L198 2L202 5L204 5L208 2L210 2L214 5L216 5L220 2L222 2L226 5L228 5L232 2L234 2L238 5L240 5L244 2L246 2L250 5L252 5L256 2L258 2L262 5L264 5L268 2L270 2L274 5L276 5L280 2L282 2L286 5L288 5" fill="none" stroke="#f3a730" stroke-width="1.5"/></svg></div><div class="ln" style="top:1255.67px;height:36.38px"><span class="num" style="font-size:26.5px;letter-spacing:-0.2026px"><i>138</i></span><span class="src" style="left:410.20px"><span style="color:#24292e">locale_selector: </span><span class="sq" style="color:#4a2492">locale_selector</span><span style="color:#24292e">,</span></span><svg class="sqv" style="left:676.25px;top:27.84px" width="234.75" height="7" viewBox="0 0 234.75 7"><path d="M0 5L4 2L6 2L10 5L12 5L16 2L18 2L22 5L24 5L28 2L30 2L34 5L36 5L40 2L42 2L46 5L48 5L52 2L54 2L58 5L60 5L64 2L66 2L70 5L72 5L76 2L78 2L82 5L84 5L88 2L90 2L94 5L96 5L100 2L102 2L106 5L108 5L112 2L114 2L118 5L120 5L124 2L126 2L130 5L132 5L136 2L138 2L142 5L144 5L148 2L150 2L154 5L156 5L160 2L162 2L166 5L168 5L172 2L174 2L178 5L180 5L184 2L186 2L190 5L192 5L196 2L198 2L202 5L204 5L208 2L210 2L214 5L216 5L220 2L222 2L226 5L228 5L232 2L234 2L238 5L240 5L244 2L246 2L250 5L252 5" fill="none" stroke="#f3a730" stroke-width="1.5"/></svg></div><div class="ln" style="top:1292.05px;height:36.38px"><span class="num" style="font-size:26.5px;letter-spacing:-0.2026px"><i>139</i></span><span class="src" style="left:410.20px"><span style="color:#24292e">show_currency: </span><span style="color:#4a2492">settings</span><span style="color:#24292e">.</span><span style="color:#1f2a7a">show_currency_selector</span></span></div><div class="ln" style="top:1328.43px;height:36.38px"><span class="num" style="font-size:26.5px;letter-spacing:-0.2026px"><i>140</i></span><span class="src" style="left:378.90px"><span style="color:#1f2a7a">%}</span></span></div><div class="ln" style="top:1364.81px;height:36.38px"><span class="num" style="font-size:26.5px;letter-spacing:-0.2026px"><i>141</i></span><span class="src" style="left:347.60px"><span style="color:#24292e">&lt;/div&gt;</span></span></div><div class="ln" style="top:1401.19px;height:36.38px"><span class="num" style="font-size:26.5px;letter-spacing:-0.2026px"><i>142</i></span><span class="src" style="left:316.30px"><span style="color:#1f2a7a">{%</span><span style="color:#24292e"> </span><span class="b" style="color:#2d7a45">endif</span><span style="color:#24292e"> </span><span style="color:#1f2a7a">%}</span></span></div><div class="ln" style="top:1437.57px;height:36.38px"><span class="num" style="font-size:26.5px;letter-spacing:-0.2026px"><i>143</i></span><span class="src" style="left:269.35px"><span style="color:#24292e">&lt;/div&gt;</span></span></div><div class="ln" style="top:1473.95px;height:36.38px"><span class="num" style="font-size:26.5px;letter-spacing:-0.2026px"><i>144</i></span></div><div class="ln" style="top:1510.33px;height:36.38px"><span class="num" style="font-size:26.5px;letter-spacing:-0.2026px"><i>145</i></span></div></div><div id="tip"></div><svg style="left:636px;top:0;z-index:5" width="100" height="1544"><path d="M67.9 513.0L72.9 520.1L77.9 513.0" fill="none" stroke="#6d6d6d" stroke-width="1.8" stroke-linecap="round" stroke-linejoin="round"/><path d="M67.9 804.0L72.9 811.1L77.9 804.0" fill="none" stroke="#6d6d6d" stroke-width="1.8" stroke-linecap="round" stroke-linejoin="round"/><path d="M67.9 876.8L72.9 883.9L77.9 876.8" fill="none" stroke="#6d6d6d" stroke-width="1.8" stroke-linecap="round" stroke-linejoin="round"/></svg><div class="abs" style="left:1138px;top:1186.1px;width:2.2px;height:29.5px;background:#111;z-index:5"></div><div id="botshadow"></div></div></body></html>
